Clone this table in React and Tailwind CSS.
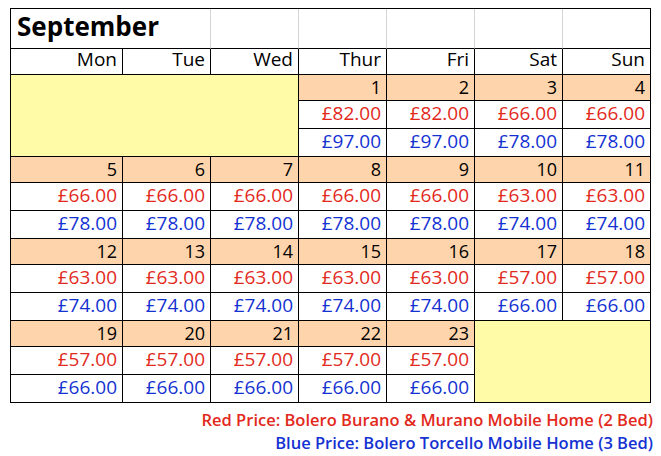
const weeks = [
  {
    dates: [null, null, null, 1, 2, 3, 4],
    red: [null, null, null, "£82.00", "£82.00", "£66.00", "£66.00"],
    blue: [null, null, null, "£97.00", "£97.00", "£78.00", "£78.00"],
  },
  {
    dates: [5, 6, 7, 8, 9, 10, 11],
    red: ["£66.00", "£66.00", "£66.00", "£66.00", "£66.00", "£63.00", "£63.00"],
    blue: ["£78.00", "£78.00", "£78.00", "£78.00", "£78.00", "£74.00", "£74.00"],
  },
  {
    dates: [12, 13, 14, 15, 16, 17, 18],
    red: ["£63.00", "£63.00", "£63.00", "£63.00", "£63.00", "£57.00", "£57.00"],
    blue: ["£74.00", "£74.00", "£74.00", "£74.00", "£74.00", "£66.00", "£66.00"],
  },
  {
    dates: [19, 20, 21, 22, 23, null, null],
    red: ["£57.00", "£57.00", "£57.00", "£57.00", "£57.00", null, null],
    blue: ["£66.00", "£66.00", "£66.00", "£66.00", "£66.00", null, null],
  },
];

const days = ["Mon", "Tue", "Wed", "Thur", "Fri", "Sat", "Sun"];

const cell = "border-r border-b border-black flex items-center justify-end pr-[5px] leading-none font-medium";

export default function App() {
  return (
    <div className="w-[661px] h-[456px] bg-white pt-2 pl-[10px] overflow-hidden" style={{ fontFamily: '"Open Sans", sans-serif' }}>
      <div className="grid grid-cols-[112px_repeat(6,88px)] grid-rows-[40px_26px_repeat(4,26px_28px_28px)] w-[641px] border-l border-t border-black text-black">
        {/* title row */}
        <div className="col-span-2 border-r border-b border-r-[#d4d4d4] border-b-black flex items-start pt-[4px] pl-[6px]">
          <span className="text-[26px] font-bold leading-none">September</span>
        </div>
        {[0, 1, 2, 3].map((i) => (
          <div key={i} className="border-r border-b border-r-[#d4d4d4] border-b-black" />
        ))}
        <div className="border-r border-b border-black" />

        {days.map((d) => (
          <div key={d} className={`${cell} text-[19px] pb-[5px]`}>{d}</div>
        ))}

        {weeks.map((w, wi) => (
          <>
            {w.dates.map((d, di) => {
              if (d === null) {
                if (wi === 0 && di === 0) return <div key={`y${wi}`} className="col-span-3 row-span-3 bg-[#fffba6] border-r border-b border-black" />;
                if (wi === 3 && di === 5) return <div key={`y${wi}`} className="col-span-2 row-span-3 bg-[#fffba6] border-r border-b border-black" />;
                return null;
              }
              return <div key={`d${wi}${di}`} className={`${cell} bg-[#fdd4ab] text-[18px] pb-[2px]`}>{d}</div>;
            })}
            {w.red.map((p, pi) => p && <div key={`r${wi}${pi}`} className={`${cell} text-[19px] pb-[2px] text-[#e2291c]`}>{p}</div>)}
            {w.blue.map((p, pi) => p && <div key={`b${wi}${pi}`} className={`${cell} text-[19px] pb-[2px] text-[#1432d2]`}>{p}</div>)}
          </>
        ))}
      </div>

      <div className="w-[643px] flex flex-col items-end pt-[5px] text-[16.5px] font-semibold leading-[23px]">
        <p className="text-[#e2291c]">Red Price: Bolero Burano &amp; Murano Mobile Home (2 Bed)</p>
        <p className="text-[#1432d2]">Blue Price: Bolero Torcello Mobile Home (3 Bed)</p>
      </div>
    </div>
  );
}
